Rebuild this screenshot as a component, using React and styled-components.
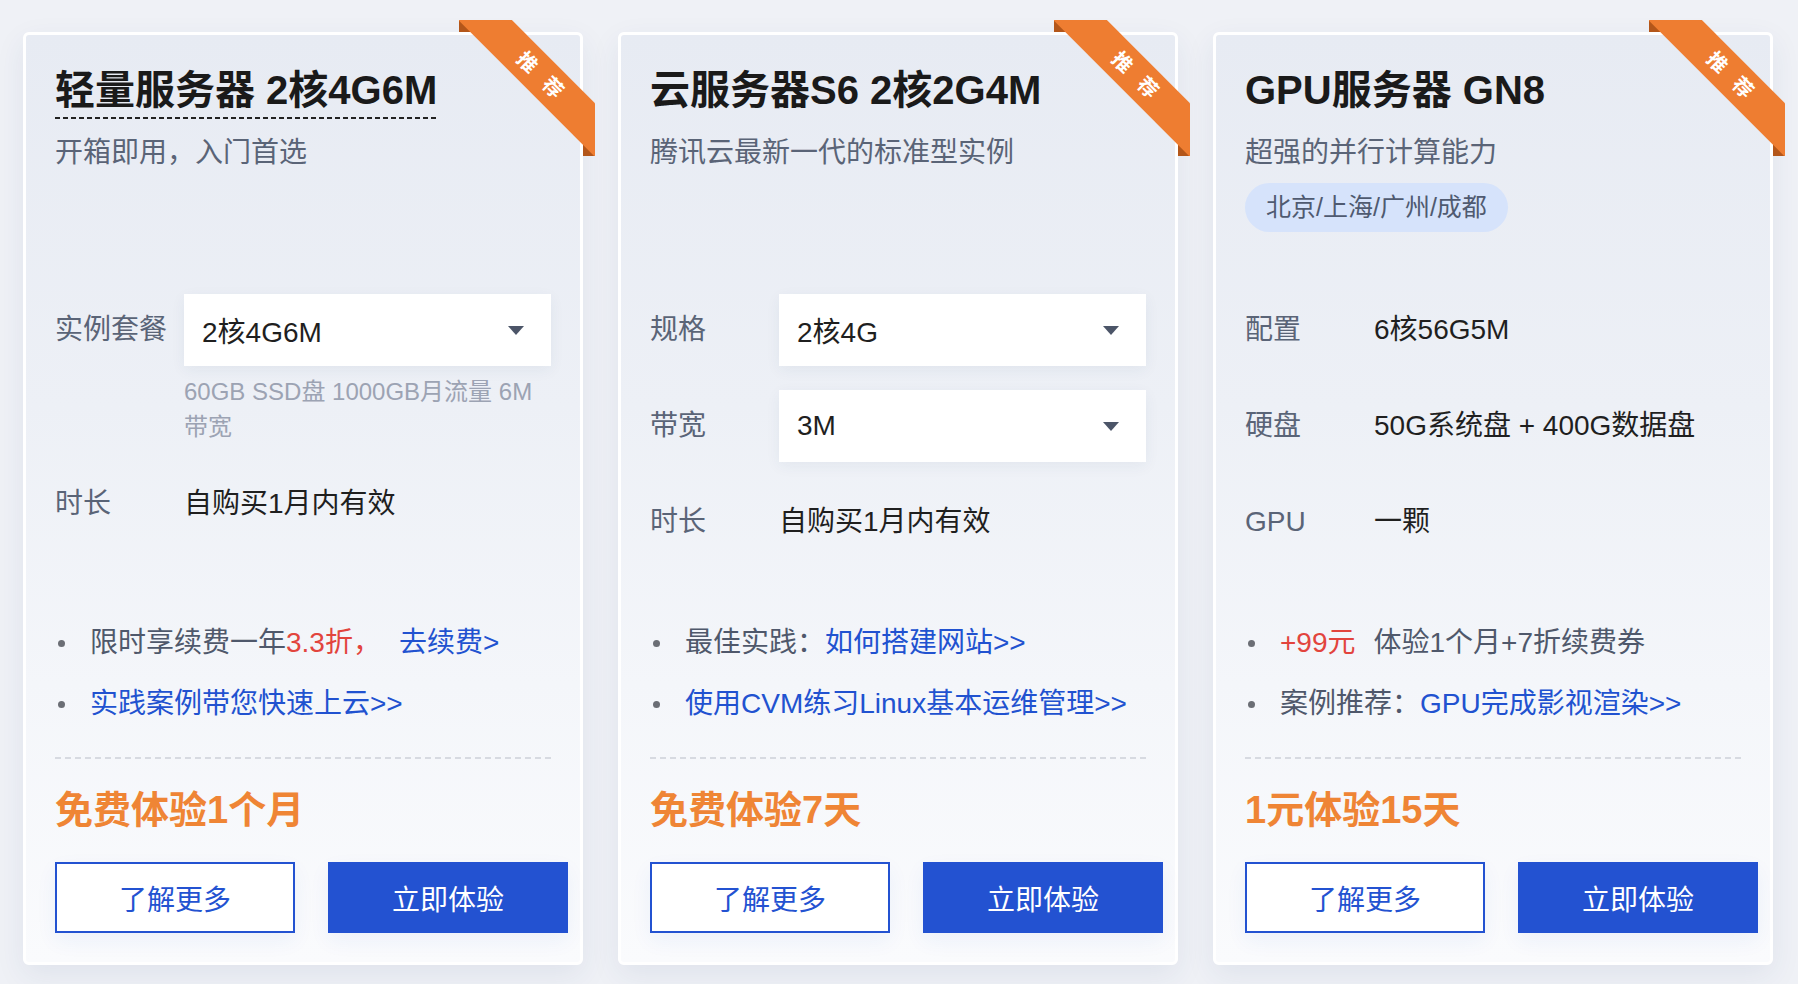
import styled, { createGlobalStyle } from "styled-components";

const GlobalStyle = createGlobalStyle`
  * {
    box-sizing: border-box;
  }
  html,
  body {
    margin: 0;
    padding: 0;
  }
  body {
    background: #eff1f6;
    font-family: "Liberation Sans", "Noto Sans CJK SC", sans-serif;
    -webkit-font-smoothing: antialiased;
    overflow: hidden;
  }
`;

const Page = styled.div`
  min-height: 100vh;
  display: flex;
  align-items: flex-start;
  gap: 35px;
  padding: 32px 23px 0;
`;

const Card = styled.div`
  position: relative;
  flex-shrink: 0;
  width: 560px;
  height: 933px;
  display: flex;
  flex-direction: column;
  padding: 29px;
  border: 3px solid #ffffff;
  border-radius: 6px;
  background: linear-gradient(
    180deg,
    #e7ebf3 0%,
    #edf0f6 40%,
    #f4f6fa 70%,
    #fafbfd 100%
  );
  box-shadow: 0 10px 30px rgba(36, 58, 110, 0.08);
`;

const Ribbon = styled.div`
  position: absolute;
  top: -15px;
  right: -15px;
  width: 136px;
  height: 136px;
  overflow: hidden;
  z-index: 2;
  pointer-events: none;

  &::before,
  &::after {
    content: "";
    position: absolute;
    z-index: 0;
    width: 12px;
    height: 12px;
    background: #b3561a;
  }
  &::before {
    top: 0;
    left: 0;
  }
  &::after {
    right: 0;
    bottom: 0;
  }
`;

const RibbonBand = styled.div`
  position: absolute;
  z-index: 1;
  left: -19px;
  top: 36px;
  width: 200px;
  height: 38px;
  transform: rotate(45deg);
  background: #ee7d31;
  color: #ffffff;
  font-size: 20px;
  font-weight: 700;
  line-height: 38px;
  text-align: center;
  letter-spacing: 16px;
  padding-left: 16px;
`;

const Header = styled.div`
  height: 230px;
  display: flex;
  flex-direction: column;
  align-items: flex-start;
`;

const Title = styled.h2`
  margin: 0;
  padding-bottom: 3px;
  font-size: 40px;
  font-weight: 700;
  line-height: 52px;
  color: #1a1a1a;
  white-space: nowrap;
  background: ${(p) =>
    p.$dashed
      ? "repeating-linear-gradient(90deg, #222 0 5px, transparent 5px 8px) left bottom / 100% 2px no-repeat"
      : "none"};
`;

const Subtitle = styled.p`
  margin: 16px 0 0;
  font-size: 28px;
  line-height: 36px;
  color: #5a6477;
`;

const Tag = styled.span`
  margin-top: 12px;
  height: 49px;
  padding: 0 21px;
  border-radius: 25px;
  background: #d6e3fb;
  color: #4f5a70;
  font-size: 25px;
  line-height: 49px;
`;

const Specs = styled.div`
  height: 264px;
  display: flex;
  flex-direction: column;
  gap: 24px;
`;

const Row = styled.div`
  display: flex;
  align-items: flex-start;
`;

const Label = styled.div`
  flex-shrink: 0;
  width: 129px;
  font-size: 28px;
  line-height: 72px;
  color: #5a6477;
`;

const Value = styled.div`
  font-size: 28px;
  line-height: 72px;
  color: #1f1f1f;
  white-space: nowrap;
`;

const Field = styled.div`
  flex: 1;
  display: flex;
  flex-direction: column;
`;

const Select = styled.div`
  height: 72px;
  display: flex;
  align-items: center;
  justify-content: space-between;
  padding: 0 27px 0 18px;
  background: #ffffff;
  box-shadow: 0 4px 14px rgba(40, 60, 110, 0.06);
  font-size: 28px;
  color: #1f1f1f;
`;

const Caret = styled.span`
  width: 0;
  height: 0;
  border-left: 8px solid transparent;
  border-right: 8px solid transparent;
  border-top: 9px solid #4c5568;
`;

const Hint = styled.div`
  margin-top: 8px;
  font-size: 24px;
  line-height: 35px;
  color: #9ca3b3;
`;

const List = styled.ul`
  margin: 65px 0 0;
  padding: 0;
  list-style: none;
  display: flex;
  flex-direction: column;
  gap: 21px;
`;

const Item = styled.li`
  position: relative;
  padding-left: 35px;
  font-size: 28px;
  line-height: 40px;
  color: #4f586b;
  white-space: nowrap;

  &::before {
    content: "";
    position: absolute;
    left: 3px;
    top: 17px;
    width: 7px;
    height: 7px;
    border-radius: 50%;
    background: #6b6e75;
  }
`;

const Link = styled.a`
  color: #2152d0;
  text-decoration: none;
  margin-left: ${(p) => (p.$gap ? "18px" : "0")};
`;

const Red = styled.span`
  color: #e2443d;
  margin-right: ${(p) => (p.$gap ? "18px" : "0")};
`;

const Divider = styled.div`
  margin-top: 33px;
  height: 2px;
  background: repeating-linear-gradient(
    90deg,
    #d7dae1 0 6px,
    transparent 6px 10px
  );
`;

const Price = styled.div`
  margin-top: 26px;
  font-size: 38px;
  font-weight: 700;
  line-height: 50px;
  color: #ef8535;
`;

const Actions = styled.div`
  margin-top: 27px;
  display: flex;
  gap: 33px;
`;

const Button = styled.button`
  flex-shrink: 0;
  width: 240px;
  height: 71px;
  border: 2px solid #2352d1;
  border-radius: 0;
  background: ${(p) => (p.$primary ? "#2352d1" : "#ffffff")};
  color: ${(p) => (p.$primary ? "#ffffff" : "#2352d1")};
  font-family: inherit;
  font-size: 28px;
  cursor: pointer;
  box-shadow: 0 8px 20px rgba(35, 82, 209, 0.06);
`;

const cards = [
  {
    title: "轻量服务器 2核4G6M",
    dashed: true,
    subtitle: "开箱即用，入门首选",
    specs: [
      {
        label: "实例套餐",
        select: "2核4G6M",
        hint: "60GB SSD盘 1000GB月流量 6M 带宽",
      },
      { label: "时长", value: "自购买1月内有效" },
    ],
    bullets: [
      <>
        限时享续费一年<Red>3.3折，</Red>
        <Link $gap href="#">
          去续费&gt;
        </Link>
      </>,
      <Link href="#">实践案例带您快速上云&gt;&gt;</Link>,
    ],
    price: "免费体验1个月",
  },
  {
    title: "云服务器S6 2核2G4M",
    subtitle: "腾讯云最新一代的标准型实例",
    specs: [
      { label: "规格", select: "2核4G" },
      { label: "带宽", select: "3M" },
      { label: "时长", value: "自购买1月内有效" },
    ],
    bullets: [
      <>
        最佳实践：<Link href="#">如何搭建网站&gt;&gt;</Link>
      </>,
      <Link href="#">使用CVM练习Linux基本运维管理&gt;&gt;</Link>,
    ],
    price: "免费体验7天",
  },
  {
    title: "GPU服务器 GN8",
    subtitle: "超强的并行计算能力",
    tag: "北京/上海/广州/成都",
    specs: [
      { label: "配置", value: "6核56G5M" },
      { label: "硬盘", value: "50G系统盘 + 400G数据盘" },
      { label: "GPU", value: "一颗" },
    ],
    bullets: [
      <>
        <Red $gap>+99元</Red>体验1个月+7折续费券
      </>,
      <>
        案例推荐：<Link href="#">GPU完成影视渲染&gt;&gt;</Link>
      </>,
    ],
    price: "1元体验15天",
  },
];

function ProductCard({ card }) {
  return (
    <Card>
      <Ribbon>
        <RibbonBand>推荐</RibbonBand>
      </Ribbon>
      <Header>
        <Title $dashed={card.dashed}>{card.title}</Title>
        <Subtitle>{card.subtitle}</Subtitle>
        {card.tag && <Tag>{card.tag}</Tag>}
      </Header>
      <Specs>
        {card.specs.map((spec) => (
          <Row key={spec.label}>
            <Label>{spec.label}</Label>
            {spec.select ? (
              <Field>
                <Select>
                  <span>{spec.select}</span>
                  <Caret />
                </Select>
                {spec.hint && <Hint>{spec.hint}</Hint>}
              </Field>
            ) : (
              <Value>{spec.value}</Value>
            )}
          </Row>
        ))}
      </Specs>
      <List>
        {card.bullets.map((b, i) => (
          <Item key={i}>{b}</Item>
        ))}
      </List>
      <Divider />
      <Price>{card.price}</Price>
      <Actions>
        <Button>了解更多</Button>
        <Button $primary>立即体验</Button>
      </Actions>
    </Card>
  );
}

export default function App() {
  return (
    <>
      <GlobalStyle />
      <Page>
        {cards.map((card) => (
          <ProductCard key={card.title} card={card} />
        ))}
      </Page>
    </>
  );
}
